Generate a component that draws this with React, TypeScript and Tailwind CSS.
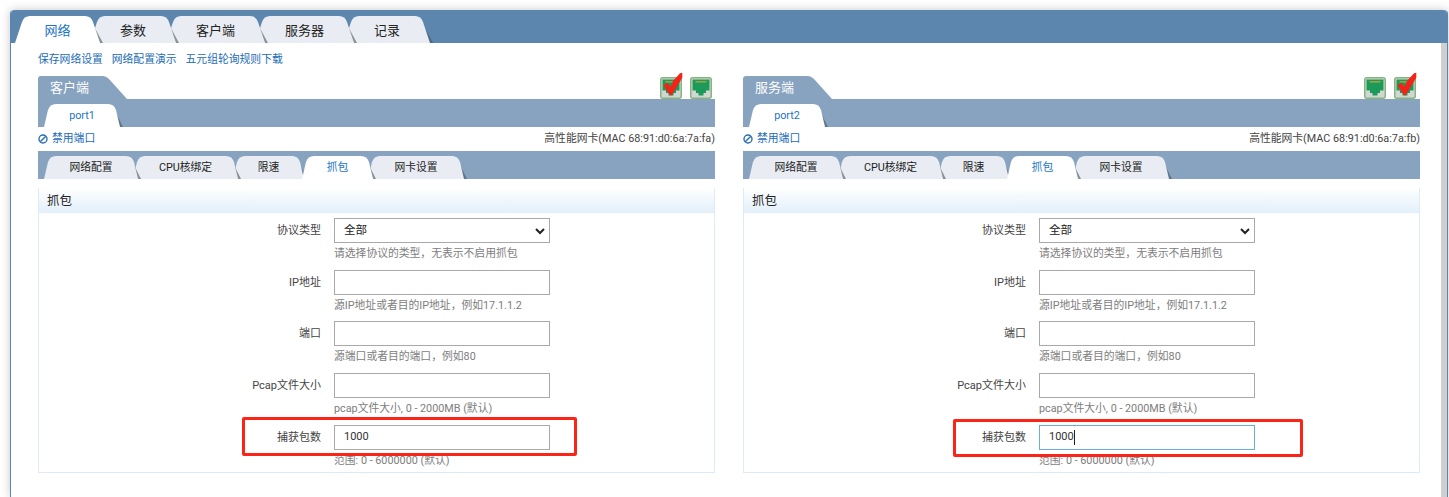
import type { ReactNode } from 'react'

const FONT = "font-['Roboto','Noto_Sans_CJK_SC',sans-serif]"

// ── Tab ───────────────────────────────────────────────────────────────────────

interface TabProps {
  label: string
  width: number
  overlap: number
  z: number
  active?: boolean
  big?: boolean
}

function Tab({ label, width, overlap, z, active, big }: TabProps) {
  const h = big ? 27 : 23
  const s = big ? 10 : 7
  const fill = active ? '#ffffff' : '#e9edf3'
  return (
    <div className="relative shrink-0" style={{ width, height: h, marginRight: -overlap, zIndex: active ? 20 : z }}>
      <svg className="absolute inset-0 overflow-visible" width={width} height={h} viewBox={`0 0 ${width} ${h}`} fill="none">
        <path d={`M${width - s} 3 L${width + 3} ${h} L${width} ${h} L${width - s - 1} 3 Z`} fill="#4a5560" opacity="0.6" />
        <path
          d={`M0 ${h} L${s - 3} 6 Q${s - 1} 0 ${s + 5} 0 L${width - s - 5} 0 Q${width - s + 1} 0 ${width - s + 3} 6 L${width} ${h} Z`}
          fill={fill}
        />
      </svg>
      <span
        className={`absolute inset-0 flex items-center justify-center ${big ? 'pt-[3px] text-[13px]' : 'pt-[1px] text-[10.8px]'} ${active ? 'text-[#1b76c4]' : 'text-[#222222]'}`}
      >
        {label}
      </span>
    </div>
  )
}

// ── Icons ─────────────────────────────────────────────────────────────────────

function PortIcon({ checked }: { checked?: boolean }) {
  return (
    <svg className="overflow-visible" width="22" height="22" viewBox="0 0 22 22" fill="none">
      <rect x="0.75" y="0.75" width="20.5" height="20.5" rx="2" fill="#d2d6d2" stroke="#86b57b" strokeWidth="1.5" />
      <path d="M2.5 2.5H19.5V13.5H16V16H13.5V18.5H8.5V16H6V13.5H2.5Z" fill="#1c9a5a" />
      <rect x="5.5" y="4" width="11" height="1.6" fill="#a5a03f" />
      {checked && (
        <path d="M3.3 8.3L7.3 5.7L10.7 9.7L13 4L20 -3.7L22.3 -4.3L22.3 0.7L11.7 18.3H10Z" fill="#f2241a" />
      )}
    </svg>
  )
}

function BanIcon() {
  return (
    <svg width="10" height="10" viewBox="0 0 10 10" fill="none">
      <circle cx="5" cy="5" r="4" stroke="#2a6fb5" strokeWidth="1.4" />
      <path d="M2.2 7.8L7.8 2.2" stroke="#2a6fb5" strokeWidth="1.4" />
    </svg>
  )
}

// ── Form ──────────────────────────────────────────────────────────────────────

function Field({ label, hint, children }: { label: string; hint: string; children: ReactNode }) {
  return (
    <div className="flex h-[51.7px]">
      <div className="w-[286px] pr-[4px] pt-[5px] text-right text-[11px] leading-[16px] text-[#444444]">{label}</div>
      <div className="ml-[9px] w-[216px]">
        {children}
        <div className="mt-[3px] whitespace-nowrap text-[10.8px] leading-[15px] text-[#7d7d7d]">{hint}</div>
      </div>
    </div>
  )
}

function TextBox({ value, focused }: { value?: string; focused?: boolean }) {
  return (
    <div
      className={`flex h-[25px] items-center border bg-white pl-[9px] text-[11px] text-[#333333] ${focused ? 'border-[#6aaee0]' : 'border-[#a9a9a9]'}`}
    >
      {value}
      {focused && <span className="h-[15px] w-px bg-[#222222]" />}
    </div>
  )
}

// ── PortPanel ─────────────────────────────────────────────────────────────────

interface PortPanelProps {
  title: string
  port: string
  mac: string
  flipIcons?: boolean
  focused?: boolean
}

function PortPanel({ title, port, mac, flipIcons, focused }: PortPanelProps) {
  return (
    <div className="w-[677px]">
      <div className="relative flex h-[23px] items-end justify-between">
        <div className="relative h-[23px] w-[89px]">
          <svg className="absolute inset-0" width="89" height="23" viewBox="0 0 89 23" fill="none">
            <path d="M0 23V3Q0 0 3 0H65Q68 0 71 3L89 23Z" fill="#87a3c0" />
          </svg>
          <span className="absolute left-[12px] top-[3px] text-[13px] leading-[17px] text-white">{title}</span>
        </div>
        <div className={`flex gap-[8px] ${flipIcons ? 'pr-[4px]' : 'pr-[3px]'}`}>
          <PortIcon checked={!flipIcons} />
          <PortIcon checked={flipIcons} />
        </div>
      </div>
      <div className="flex h-[28px] items-end bg-[#87a3c0] pl-[6px]">
        <Tab label={port} width={76} overlap={0} z={1} active />
      </div>
      <div className="flex h-[24px] items-center justify-between">
        <div className="flex items-center gap-[4px] text-[#1a6bb8]">
          <BanIcon />
          <span className="text-[10.8px]">禁用端口</span>
        </div>
        <span className="text-[10.8px] text-[#444444]">高性能网卡({mac})</span>
      </div>
      <div className="flex h-[28px] items-end bg-[#87a3c0] pl-[6px]">
        <Tab label="网络配置" width={94} overlap={5} z={5} />
        <Tab label="CPU核绑定" width={105} overlap={5} z={4} />
        <Tab label="限速" width={71} overlap={2} z={3} />
        <Tab label="抓包" width={71} overlap={5} z={2} active />
        <Tab label="网卡设置" width={96} overlap={0} z={1} />
      </div>
      <div className="mt-[9px] h-[285px] border border-t-0 border-[#dcebf7]">
        <div className="h-[25px] bg-gradient-to-b from-white to-[#e2effa] pl-[8px] text-[12.5px] leading-[25px] text-[#222222]">
          抓包
        </div>
        <div className="pt-[5px]">
          <Field label="协议类型" hint="请选择协议的类型，无表示不启用抓包">
            <div className="flex h-[25px] items-center justify-between border border-[#a9a9a9] pl-[9px] pr-[3px] text-[11.5px] text-[#222222]">
              全部
              <svg width="12" height="12" viewBox="0 0 12 12" fill="none">
                <path d="M2 4L6 8L10 4" stroke="#222222" strokeWidth="2" />
              </svg>
            </div>
          </Field>
          <Field label="IP地址" hint="源IP地址或者目的IP地址，例如17.1.1.2">
            <TextBox />
          </Field>
          <Field label="端口" hint="源端口或者目的端口，例如80">
            <TextBox />
          </Field>
          <Field label="Pcap文件大小" hint="pcap文件大小, 0 - 2000MB (默认)">
            <TextBox />
          </Field>
          <Field label="捕获包数" hint="范围: 0 - 6000000 (默认)">
            <TextBox value="1000" focused={focused} />
          </Field>
        </div>
      </div>
    </div>
  )
}

// ── App ───────────────────────────────────────────────────────────────────────

export default function App() {
  return (
    <div className={`relative h-[497px] w-[1449px] overflow-hidden bg-white pl-[10px] pt-[10px] ${FONT}`}>
      <div className="h-[487px] w-[1438px] rounded-t-[4px] border-x border-[#5c86ad] bg-white shadow-[0_0_10px_rgba(0,0,0,0.22)]">
        <div className="flex h-[33px] items-end rounded-t-[4px] bg-[#5c86ad] pl-[4px]">
          <Tab label="网络" width={85} overlap={10} z={5} active big />
          <Tab label="参数" width={86} overlap={10} z={4} big />
          <Tab label="客户端" width={99} overlap={10} z={3} big />
          <Tab label="服务器" width={99} overlap={10} z={2} big />
          <Tab label="记录" width={86} overlap={0} z={1} big />
        </div>
        <div className="flex h-[454px]">
          <div className="w-[1430px] shrink-0">
            <div className="flex h-[33px] items-center gap-[9px] pl-[27px] pt-[2px] text-[10.8px] text-[#1a6bb8]">
              <span>保存网络设置</span>
              <span>网络配置演示</span>
              <span>五元组轮询规则下载</span>
            </div>
            <div className="flex gap-[28px] pl-[27px]">
              <PortPanel title="客户端" port="port1" mac="MAC 68:91:d0:6a:7a:fa" />
              <PortPanel title="服务端" port="port2" mac="MAC 68:91:d0:6a:7a:fb" flipIcons focused />
            </div>
          </div>
          <div className="w-[6px] shrink-0 bg-[#d0d0d0]" />
        </div>
      </div>
      <div className="absolute left-[242px] top-[417px] z-30 h-[39px] w-[335px] rounded-[2px] border-[3px] border-[#fb2416]" />
      <div className="absolute left-[953px] top-[419px] z-30 h-[38px] w-[350px] rounded-[2px] border-[3px] border-[#fb2416]" />
    </div>
  )
}
